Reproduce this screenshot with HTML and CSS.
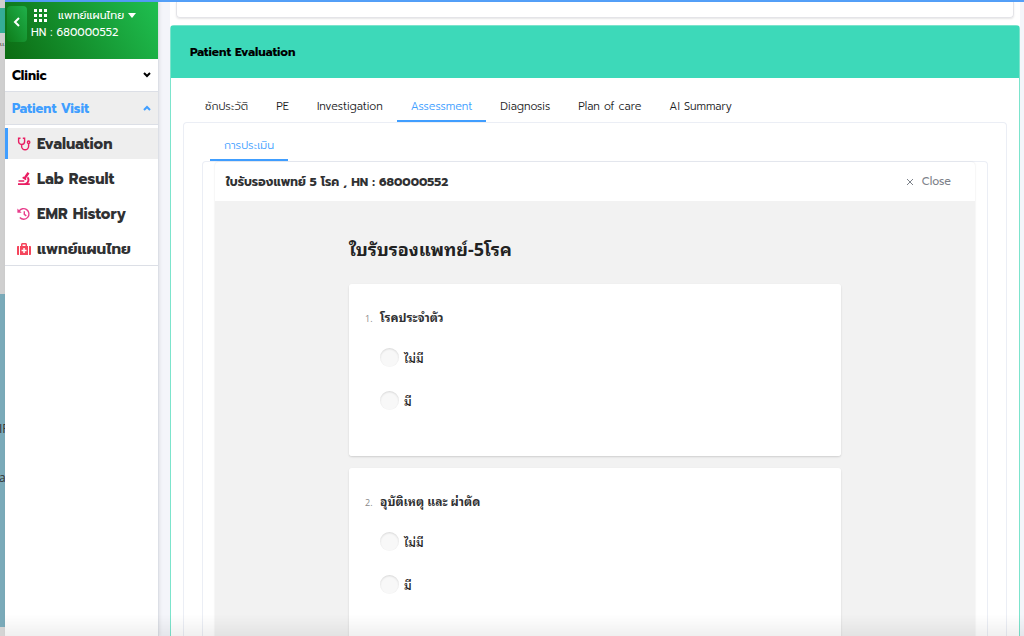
FILE: index.html
```html
<!DOCTYPE html>
<html lang="th">

<head>
    <meta charset="UTF-8">
    <meta name="viewport" content="width=device-width, initial-scale=1.0">
    <title>Patient Evaluation</title>
    <link rel="stylesheet" href="styles.css">
</head>

<body>
    <div class="backdrop">
        <div class="backdrop-head"></div>
        <div class="backdrop-body">น.</div>
        <div class="backdrop-panel">
            <span>IR</span>
            <span>a1</span>
        </div>
        <div class="backdrop-foot"></div>
    </div>

    <div class="drawer">
        <aside class="sidebar">
            <div class="patient">
                <button type="button" class="back" aria-label="Back">
                    <svg width="8" height="12" viewBox="0 0 8 12"><path d="M6 2 2 6l4 4" /></svg>
                </button>
                <div class="patient-info">
                    <button type="button" class="dept">
                        <svg width="14" height="14" viewBox="0 0 14 14"><path d="M0 1h3v3H0zM5 1h3v3H5zM10 1h3v3h-3zM0 6h3v3H0zM5 6h3v3H5zM10 6h3v3h-3zM0 11h3v3H0zM5 11h3v3H5zM10 11h3v3h-3z" /></svg>
                        <span>แพทย์แผนไทย</span>
                        <svg width="8" height="5" viewBox="0 0 8 5"><path d="M0 0h8L4 5z" /></svg>
                    </button>
                    <div class="hn">HN : 680000552</div>
                </div>
            </div>

            <button type="button" class="group">
                Clinic
                <svg width="8" height="6" viewBox="0 0 8 6"><path d="M1 1l3 3 3-3" /></svg>
            </button>
            <button type="button" class="group open">
                Patient Visit
                <svg width="8" height="6" viewBox="0 0 8 6"><path d="M1 5l3-3 3 3" /></svg>
            </button>

            <nav class="menu">
                <a href="#evaluation" class="active">
                    <svg class="line" width="14" height="14" viewBox="0 0 14 14"><path d="M3.5 1.3H1.6v3.2a3 3 0 0 0 6 0V1.3H5.8M4.6 7.6v1.6a3.5 3.5 0 0 0 7 0V6.4" /><circle cx="11.6" cy="5.2" r="1.2" /></svg>
                    Evaluation
                </a>
                <a href="#lab">
                    <svg class="lab" width="14" height="14" viewBox="0 0 14 14"><path d="M10.5 0l2 1.4-3.6 5.2-2-1.4zM6.2 4.5l3.4 2.4-1 1.3-3.4-2.3zM1.5 8.3h5.8v1.4H1.5zM11 4.6c2 1.8 2 4.9.1 6.7h1.7V13H1v-1.7h6.2c2.4 0 4.2-2.7 2.8-5.2z" /></svg>
                    Lab Result
                </a>
                <a href="#history">
                    <svg class="line history" width="14" height="14" viewBox="0 0 14 14"><path d="M2 4.4a5.3 5.3 0 1 1 .8 6.2M7.3 4.2v3.2l2 1.5" /><path class="solid" d="M.4 1.4v4.3h4.3z" /></svg>
                    EMR History
                </a>
                <a href="#thai-medicine">
                    <svg class="kit" width="14" height="14" viewBox="0 0 14 14"><path fill-rule="evenodd" d="M3 4h1V2.500C4 1.600 4.600 1 5.500 1h3c.9 0 1.500.6 1.500 1.500V4h1v9H3zM5.500 4h3V2.500h-3zM6.300 6v1.700H4.600v1.500h1.700v1.700h1.500V9.200h1.700V7.700H7.800V6zM0 5c0-.6.4-1 1-1h1v9H1c-.6 0-1-.4-1-1zM12 4h1c.6 0 1 .4 1 1v7c0 .6-.4 1-1 1h-1z" /></svg>
                    แพทย์แผนไทย
                </a>
            </nav>
        </aside>

        <main class="content">
            <div class="summary"></div>

            <section class="panel">
                <h1 class="panel-title">Patient Evaluation</h1>
                <div class="panel-body">
                    <nav class="tabs">
                        <a href="#hx">ซักประวัติ</a>
                        <a href="#pe">PE</a>
                        <a href="#investigation">Investigation</a>
                        <a href="#assessment" class="active">Assessment</a>
                        <a href="#diagnosis">Diagnosis</a>
                        <a href="#plan">Plan of care</a>
                        <a href="#ai">AI Summary</a>
                    </nav>
                    <div class="pane">
                        <nav class="tabs sub">
                            <a href="#assess" class="active">การประเมิน</a>
                        </nav>
                        <div class="pane inner">
                            <article class="sheet">
                                <header class="sheet-head">
                                    <h2>ใบรับรองแพทย์ 5 โรค , HN : 680000552</h2>
                                    <button type="button" class="close">
                                        <svg width="8" height="8" viewBox="0 0 8 8"><path d="M1 1l6 6M7 1L1 7" /></svg>
                                        Close
                                    </button>
                                </header>
                                <form class="survey">
                                    <h3>ใบรับรองแพทย์-5โรค</h3>
                                    <fieldset class="question">
                                        <legend><span class="num">1.</span>โรคประจำตัว</legend>
                                        <label><input type="radio" name="disease" value="no">ไม่มี</label>
                                        <label><input type="radio" name="disease" value="yes">มี</label>
                                    </fieldset>
                                    <fieldset class="question">
                                        <legend><span class="num">2.</span>อุบัติเหตุ และ ผ่าตัด</legend>
                                        <label><input type="radio" name="accident" value="no">ไม่มี</label>
                                        <label><input type="radio" name="accident" value="yes">มี</label>
                                    </fieldset>
                                </form>
                            </article>
                        </div>
                    </div>
                </div>
            </section>
        </main>
    </div>
    <div class="bottom-shade"></div>
</body>

</html>
```
FILE: styles.css
```css
* {
    box-sizing: border-box;
}

body {
    display: flex;
    height: 100vh;
    margin: 0;
    overflow: hidden;
    font-family: "Prompt", "Noto Sans", "Noto Sans Thai", sans-serif;
    font-size: 11px;
    color: #303133;
    background-color: #f4f5fa;
}

h1,
h2,
h3 {
    margin: 0;
}

a {
    color: inherit;
    text-decoration: none;
}

button {
    padding: 0;
    border: none;
    background: none;
    color: inherit;
    font: inherit;
    cursor: pointer;
}

svg {
    flex: none;
    fill: currentColor;
}

/* Page that stays visible behind the drawer */
.backdrop {
    display: flex;
    flex: none;
    flex-direction: column;
    width: 5px;
    overflow: hidden;
    background-color: #cfcfcf;
    color: #333;
}

.backdrop-head {
    height: 25px;
    margin-top: 8px;
    background-color: #35ad97;
}

.backdrop-body {
    height: 261px;
    padding-top: 6px;
    font-size: 6px;
}

.backdrop-panel {
    display: flex;
    flex: 1;
    flex-direction: column;
    gap: 33px;
    padding-top: 127px;
    background-color: #7aaab9;
    font-family: "Open Sans", sans-serif;
    font-size: 12px;
    line-height: 16px;
}

.backdrop-panel span {
    margin-left: -1px;
}

.backdrop-foot {
    height: 9px;
    background-color: #d4d4d4;
}

.drawer {
    display: flex;
    flex: 1;
    min-width: 0;
    border-top: 2px solid #539ff8;
}

/* Sidebar */
.sidebar {
    flex: none;
    width: 154px;
    background-color: #fff;
    border-right: 1px solid #dcdfe6;
    box-shadow: 1px 0 3px rgba(0, 0, 0, 0.08);
}

.patient {
    display: flex;
    gap: 4px;
    height: 57px;
    padding: 4px 2px;
    background: linear-gradient(60deg, #0c6b12, #1fbf50);
    color: #fff;
}

.back {
    width: 20px;
    height: 36px;
    border-radius: 4px;
    background: linear-gradient(60deg, #0e7c1a, #1fb04a);
}

.back svg,
.group svg,
.close svg,
.line {
    fill: none;
    stroke: currentColor;
    stroke-width: 2;
}

.dept {
    display: flex;
    align-items: center;
    gap: 4px;
    height: 18px;
    padding-left: 3px;
}

.dept span {
    padding-left: 6px;
}

.hn {
    line-height: 18px;
}

.group {
    display: flex;
    align-items: center;
    justify-content: space-between;
    width: 100%;
    height: 33px;
    padding: 0 7px;
    border-bottom: 1px solid #dcdfe6;
    color: #000;
    font-size: 13px;
    font-weight: bold;
}

.group.open {
    background-color: #eee;
    color: #409eff;
}

.menu {
    display: flex;
    flex-direction: column;
    gap: 4px;
    padding: 3px 0 1px;
    border-bottom: 1px solid #dcdfe6;
}

.menu a {
    display: flex;
    align-items: center;
    gap: 6px;
    height: 31px;
    padding-left: 9px;
    border-left: 3px solid transparent;
    font-size: 15px;
    font-weight: bold;
}

.menu .active {
    border-left-color: #409eff;
    background-color: #eee;
}

.menu svg {
    color: #e91e63;
}

.menu .history {
    color: #e83e8c;
}

.menu .kit {
    color: #f5455c;
}

.line {
    stroke-width: 1.4;
}

.solid {
    fill: currentColor;
    stroke: none;
}

/* Main content */
.content {
    display: flex;
    flex: 1;
    flex-direction: column;
    gap: 7px;
    min-width: 0;
    margin: 0 4px 0 11px;
    background-color: #fff;
}

.summary {
    flex: none;
    height: 16px;
    margin: 0 6px;
    border: 1px solid #e4e4e8;
    border-top: none;
    border-radius: 0 0 4px 4px;
    box-shadow: 0 1px 2px rgba(0, 0, 0, 0.1);
}

.panel {
    display: flex;
    flex: 1;
    flex-direction: column;
    border: 1px solid #7ce4cc;
    border-bottom: none;
    border-radius: 4px 4px 0 0;
    background-color: #fff;
}

.panel-title {
    padding-left: 19px;
    background-color: #3dd9b9;
    color: #000;
    font-size: 12px;
    line-height: 52px;
}

.panel-body {
    display: flex;
    flex: 1;
    flex-direction: column;
    padding: 12px 12px 0;
}

.tabs {
    display: flex;
    padding-left: 8px;
    color: #1c1c1e;
}

.tabs a {
    height: 32px;
    padding: 0 14px;
    border-bottom: 2px solid transparent;
    font-weight: 300;
    line-height: 34px;
}

.tabs .active {
    border-bottom-color: #409eff;
    color: #409eff;
}

.pane {
    display: flex;
    flex: 1;
    flex-direction: column;
    padding: 6px 18px 0;
    border: 1px solid #ebeef5;
    border-bottom: none;
    border-radius: 4px 4px 0 0;
}

.pane.inner {
    padding: 0 12px;
}

.sheet {
    display: flex;
    flex: 1;
    flex-direction: column;
    border-radius: 4px;
    box-shadow: 0 0 2px rgba(0, 0, 0, 0.12);
}

.sheet-head {
    display: flex;
    align-items: center;
    justify-content: space-between;
    height: 39px;
    padding: 0 24px 0 11px;
}

.sheet-head h2 {
    font-size: 12px;
}

.close {
    display: flex;
    align-items: center;
    gap: 8px;
    color: #7d828a;
}

.close svg {
    stroke-width: 1;
}

/* Survey form */
.survey {
    flex: 1;
    padding: 32px 24px 0;
    background-color: #f2f2f2;
    font-family: "Open Sans", "Noto Sans Thai Looped", "Noto Looped Thai", "Loma", "Garuda", "Waree", sans-serif;
}

.survey h3 {
    max-width: 492px;
    margin: 0 auto 18px;
    color: #222;
    font-size: 18px;
    line-height: 33px;
}

.question {
    display: flex;
    flex-direction: column;
    max-width: 492px;
    height: 172px;
    margin: 0 auto 12px;
    padding: 24px 16px;
    border: none;
    border-radius: 3px;
    background-color: #fff;
    box-shadow: 0 1px 2px rgba(0, 0, 0, 0.15);
}

.question legend {
    float: left;
    padding: 0;
    font-size: 12px;
    font-weight: bold;
    line-height: 20px;
}

.num {
    display: inline-block;
    width: 15px;
    color: #888;
    font-size: 9px;
    font-weight: normal;
}

.question label {
    display: flex;
    align-items: center;
    gap: 5px;
    height: 43px;
    padding-left: 15px;
    color: #222;
    font-size: 12px;
    font-weight: 500;
}

.question label:first-of-type {
    margin-top: 7px;
}

.question input {
    appearance: none;
    width: 19px;
    height: 19px;
    margin: 0;
    border-radius: 50%;
    background-color: #f8f8f8;
    box-shadow: inset 0 1px 2px rgba(0, 0, 0, 0.13);
}

.question input:checked {
    background-color: #409eff;
}

.bottom-shade {
    position: fixed;
    right: 0;
    bottom: 0;
    left: 5px;
    height: 22px;
    background: linear-gradient(transparent, rgba(0, 0, 0, 0.06));
    pointer-events: none;
}
```
